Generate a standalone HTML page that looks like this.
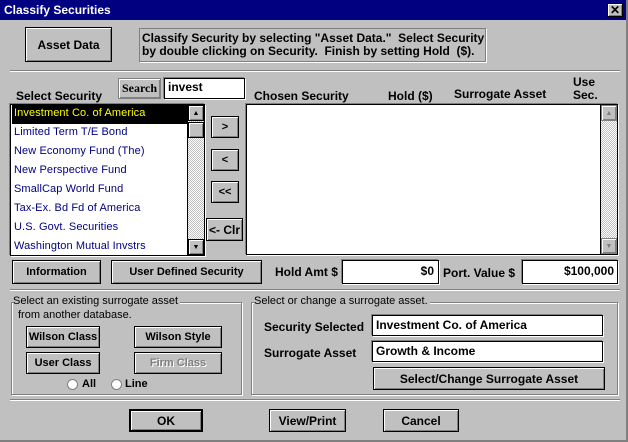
<!DOCTYPE html>
<html><head><style>
*{box-sizing:border-box;margin:0;padding:0}
body{width:628px;height:442px;background:#c0c0c0;font-family:"Liberation Sans",sans-serif;font-size:11px;font-weight:bold;position:relative;overflow:hidden;color:#000}
.a{position:absolute;white-space:nowrap}
.title{left:0;top:0;width:626px;height:20px;background:#000080;color:#fff;font-size:12px;padding:3px 4px}
.btn{position:absolute;background:#c0c0c0;border:1px solid #000;box-shadow:inset 1px 1px 0 #fff,inset -1px -1px 0 #808080;display:flex;align-items:center;justify-content:center;font-size:11px}
.in{position:absolute;background:#fff;border:1px solid #000;box-shadow:-1px -1px 0 #808080,1px 1px 0 #fff}
.sep{position:absolute;height:2px;border-top:1px solid #808080;border-bottom:1px solid #fff}
.grp{position:absolute;border:1px solid #808080;box-shadow:1px 1px 0 #fff,inset 1px 1px 0 #fff}
.sb{position:absolute;background:repeating-conic-gradient(#c0c0c0 0 25%,#fff 0 50%) 0 0/2px 2px;border-left:1px solid #000}
.row{position:absolute;left:1px;width:175px;height:19px;font-weight:normal;font-size:11px;color:#000080;padding:2px 2px;letter-spacing:0.1px}
.rad{position:absolute;width:11px;height:11px;border-radius:50%;background:#fff;border:1px solid #808080}
</style></head><body>
<div style="position:absolute;left:0;top:0;width:628px;height:442px;border-right:2px solid #808080;border-bottom:2px solid #808080"></div>
<div class="a title">Classify Securities</div>
<div class="btn" style="left:607px;top:3px;width:16px;height:14px;font-size:12px">✕</div>

<div class="btn" style="left:25px;top:27px;width:87px;height:35px;font-size:12px">Asset Data</div>
<div class="a" style="left:139px;top:28px;width:347px;height:34px;border:1px solid #808080;box-shadow:1px 1px 0 #fff;padding:3px 2px;line-height:13px;font-size:12px">Classify Security by selecting "Asset Data."&nbsp; Select Security<br>by double clicking on Security.&nbsp; Finish by setting Hold&nbsp; ($).</div>
<div class="sep" style="left:10px;top:70px;width:610px"></div>

<div class="btn" style="left:118px;top:78px;width:43px;height:21px;border-color:#808080;font-family:'Liberation Serif',serif;font-size:12px">Search</div>
<div class="in" style="left:164px;top:78px;width:81px;height:21px;padding:1px 3px;font-size:12px">invest</div>
<div class="a" style="left:16px;top:89px;font-size:12px">Select Security</div>
<div class="a" style="left:254px;top:89px;font-size:12px">Chosen Security</div>
<div class="a" style="left:388px;top:89px;font-size:12px">Hold ($)</div>
<div class="a" style="left:454px;top:87px;font-size:12px">Surrogate Asset</div>
<div class="a" style="left:573px;top:76px;font-size:12px;line-height:13px">Use<br>Sec.</div>

<div class="in" style="left:10px;top:104px;width:195px;height:152px">
<div class="row" style="top:0;background:#000;color:#ff0">Investment Co. of America</div>
<div class="row" style="top:19px">Limited Term T/E Bond</div>
<div class="row" style="top:38px">New Economy Fund (The)</div>
<div class="row" style="top:57px">New Perspective Fund</div>
<div class="row" style="top:76px">SmallCap World Fund</div>
<div class="row" style="top:95px">Tax-Ex. Bd Fd of America</div>
<div class="row" style="top:114px">U.S. Govt. Securities</div>
<div class="row" style="top:133px">Washington Mutual Invstrs</div>
<div class="sb" style="left:176px;top:0;width:17px;height:150px"></div>
<div class="btn" style="left:177px;top:0;width:16px;height:16px;font-size:7px">▲</div>
<div class="btn" style="left:177px;top:17px;width:16px;height:16px"></div>
<div class="btn" style="left:177px;top:134px;width:16px;height:16px;font-size:7px">▼</div>
</div>

<div class="btn" style="left:211px;top:116px;width:28px;height:22px">&gt;</div>
<div class="btn" style="left:211px;top:149px;width:28px;height:22px">&lt;</div>
<div class="btn" style="left:211px;top:181px;width:28px;height:22px">&lt;&lt;</div>
<div class="btn" style="left:206px;top:218px;width:37px;height:23px;font-size:12px">&lt;- Clr</div>

<div class="in" style="left:246px;top:104px;width:372px;height:151px">
<div class="sb" style="left:353px;top:0;width:17px;height:149px"></div>
<div class="btn" style="left:354px;top:0;width:16px;height:16px;font-size:7px;color:#808080;border-color:#808080">▲</div>
<div class="btn" style="left:354px;top:133px;width:16px;height:16px;font-size:7px;color:#808080;border-color:#808080">▼</div>
</div>

<div class="btn" style="left:12px;top:260px;width:89px;height:24px">Information</div>
<div class="btn" style="left:111px;top:260px;width:151px;height:24px">User Defined Security</div>
<div class="a" style="left:275px;top:265px;font-size:12px">Hold Amt $</div>
<div class="in" style="left:342px;top:260px;width:97px;height:24px;text-align:right;padding:3px 4px;font-size:12px">$0</div>
<div class="a" style="left:443px;top:266px;font-size:12px">Port. Value $</div>
<div class="in" style="left:522px;top:260px;width:96px;height:24px;text-align:right;padding:3px 3px;font-size:12px">$100,000</div>
<div class="sep" style="left:10px;top:289px;width:610px"></div>

<div class="grp" style="left:11px;top:302px;width:231px;height:93px"></div>
<div class="a" style="left:13px;top:295px;background:#c0c0c0;font-weight:normal;font-size:11px;line-height:13px;padding-right:2px">Select an existing surrogate asset</div>
<div class="a" style="left:18px;top:309px;font-weight:normal;font-size:11px">from another database.</div>
<div class="btn" style="left:26px;top:326px;width:74px;height:22px">Wilson Class</div>
<div class="btn" style="left:134px;top:326px;width:88px;height:22px">Wilson Style</div>
<div class="btn" style="left:26px;top:352px;width:74px;height:22px">User Class</div>
<div class="btn" style="left:134px;top:352px;width:88px;height:22px;color:#808080;text-shadow:1px 1px 0 #fff">Firm Class</div>
<div class="rad" style="left:67px;top:379px"></div><div class="a" style="left:82px;top:378px">All</div>
<div class="rad" style="left:111px;top:379px"></div><div class="a" style="left:125px;top:378px">Line</div>

<div class="grp" style="left:251px;top:302px;width:367px;height:93px"></div>
<div class="a" style="left:254px;top:295px;background:#c0c0c0;font-weight:normal;font-size:11px;line-height:13px;padding-right:2px">Select or change a surrogate asset.</div>
<div class="a" style="left:264px;top:320px;font-size:12px">Security Selected</div>
<div class="in" style="left:372px;top:315px;width:231px;height:21px;padding:2px 3px;font-size:12px">Investment Co. of America</div>
<div class="a" style="left:264px;top:346px;font-size:12px">Surrogate Asset</div>
<div class="in" style="left:372px;top:341px;width:231px;height:21px;padding:2px 3px;font-size:12px">Growth &amp; Income</div>
<div class="btn" style="left:373px;top:367px;width:232px;height:23px;font-size:12px">Select/Change Surrogate Asset</div>
<div class="sep" style="left:10px;top:399px;width:610px"></div>

<div class="btn" style="left:129px;top:409px;width:74px;height:23px;border-width:2px;font-size:12px">OK</div>
<div class="btn" style="left:269px;top:409px;width:77px;height:23px;font-size:12px">View/Print</div>
<div class="btn" style="left:383px;top:409px;width:76px;height:23px;font-size:12px">Cancel</div>
</body></html>
